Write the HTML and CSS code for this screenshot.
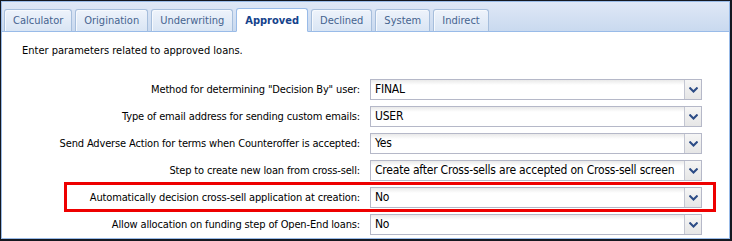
FILE: index.html
```html
<!DOCTYPE html>
<html>
<head>
<meta charset="utf-8">
<link rel="stylesheet" href="styles.css">
</head>
<body>
<div class="frame">
  <div class="panel">
    <div class="tabbar">
      <div class="tab">Calculator</div>
      <div class="tab">Origination</div>
      <div class="tab">Underwriting</div>
      <div class="tab active">Approved</div>
      <div class="tab">Declined</div>
      <div class="tab">System</div>
      <div class="tab">Indirect</div>
    </div>
    <div class="content">
      <p class="intro">Enter parameters related to approved loans.</p>
      <div class="form">
        <div class="label">Method for determining "Decision By" user:</div>
        <div class="select"><span class="val">FINAL</span><span class="arrow"><svg width="9" height="6" viewBox="0 0 9 6"><path d="M0.5 0.5 L4.5 4.5 L8.5 0.5" fill="none" stroke="#2c4c86" stroke-width="2"/></svg></span></div>
        <div class="label">Type of email address for sending custom emails:</div>
        <div class="select"><span class="val">USER</span><span class="arrow"><svg width="9" height="6" viewBox="0 0 9 6"><path d="M0.5 0.5 L4.5 4.5 L8.5 0.5" fill="none" stroke="#2c4c86" stroke-width="2"/></svg></span></div>
        <div class="label">Send Adverse Action for terms when Counteroffer is accepted:</div>
        <div class="select"><span class="val">Yes</span><span class="arrow"><svg width="9" height="6" viewBox="0 0 9 6"><path d="M0.5 0.5 L4.5 4.5 L8.5 0.5" fill="none" stroke="#2c4c86" stroke-width="2"/></svg></span></div>
        <div class="label">Step to create new loan from cross-sell:</div>
        <div class="select"><span class="val">Create after Cross-sells are accepted on Cross-sell screen</span><span class="arrow"><svg width="9" height="6" viewBox="0 0 9 6"><path d="M0.5 0.5 L4.5 4.5 L8.5 0.5" fill="none" stroke="#2c4c86" stroke-width="2"/></svg></span></div>
        <div class="label">Automatically decision cross-sell application at creation:</div>
        <div class="select"><span class="val">No</span><span class="arrow"><svg width="9" height="6" viewBox="0 0 9 6"><path d="M0.5 0.5 L4.5 4.5 L8.5 0.5" fill="none" stroke="#2c4c86" stroke-width="2"/></svg></span></div>
        <div class="label">Allow allocation on funding step of Open-End loans:</div>
        <div class="select"><span class="val">No</span><span class="arrow"><svg width="9" height="6" viewBox="0 0 9 6"><path d="M0.5 0.5 L4.5 4.5 L8.5 0.5" fill="none" stroke="#2c4c86" stroke-width="2"/></svg></span></div>
      </div>
    </div>
  </div>
  <div class="highlight"></div>
</div>
</body>
</html>
```
FILE: styles.css
```css
* { box-sizing: border-box; }
html, body { margin: 0; padding: 0; background: #fff; }
body { font-family: "DejaVu Sans Condensed", "DejaVu Sans", sans-serif; font-size: 11px; color: #000; }

.frame {
  position: relative;
  width: 732px;
  height: 241px;
  border-top: 1px solid #141820;
  border-left: 1px solid #141820;
  border-right: 2px solid #141820;
  border-bottom: 2px solid #141820;
}
.panel {
  height: 100%;
  border: 1px solid #99bbe8;
  display: flex;
  flex-direction: column;
}
.tabbar {
  height: 30px;
  padding: 6px 0 0 2px;
  display: flex;
  gap: 3px;
  align-items: flex-end;
  background: linear-gradient(#dfe8f6, #c9d9ef);
  border-bottom: 1px solid #99bbe8;
}
.tab {
  height: 23px;
  margin-bottom: -1px;
  padding: 0 8px;
  display: flex;
  align-items: center;
  border: 1px solid #a6bedc;
  border-bottom-color: #99bbe8;
  border-radius: 3px 3px 0 0;
  background: linear-gradient(#eef3fb, #d9e5f4);
  box-shadow: inset 1px 1px 0 #f6f9fd;
  color: #45638f;
  font-size: 11px;
}
.tab.active {
  height: 24px;
  background: #fff;
  border-color: #99bbe8;
  border-bottom-color: #fff;
  color: #15428b;
  font-weight: bold;
  box-shadow: none;
}
.content {
  flex: 1;
  padding: 12px 0 0 0;
}
.intro {
  margin: 0 0 21px 20px;
  line-height: 14px;
}
.form {
  display: grid;
  grid-template-columns: 358px 332px;
  column-gap: 10px;
  row-gap: 6px;
}
.label {
  height: 21px;
  line-height: 21px;
  text-align: right;
  white-space: nowrap;
  letter-spacing: -0.15px;
}
.select {
  height: 21px;
  display: flex;
  border: 1px solid #b5b8c8;
  background: linear-gradient(#e9e9e9 0, #ffffff 5px, #ffffff 100%);
}
.val {
  flex: 1;
  padding-left: 4px;
  line-height: 19px;
  font-size: 12px;
  letter-spacing: -0.2px;
  white-space: nowrap;
  overflow: hidden;
}
.arrow {
  width: 17px;
  display: flex;
  align-items: center;
  justify-content: center;
  border-left: 1px solid #c3c6d2;
  background: linear-gradient(#f5f5f5, #e6e6e6);
}
.highlight {
  position: absolute;
  left: 63px;
  top: 181px;
  width: 652px;
  height: 30px;
  border: 3px solid #ee0000;
}
```
